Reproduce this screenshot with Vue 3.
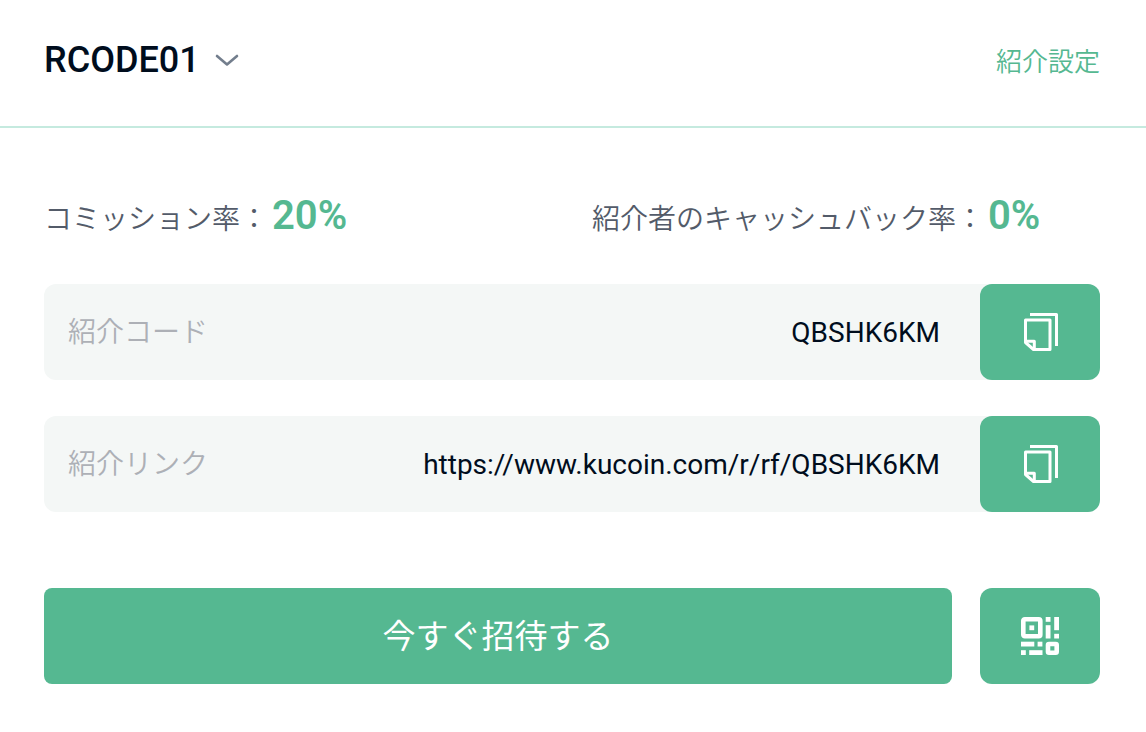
<script setup>
const rates = [
  { label: 'コミッション率：', value: '20%' },
  { label: '紹介者のキャッシュバック率：', value: '0%' },
]
const fields = [
  { id: 'referral-code', label: '紹介コード', value: 'QBSHK6KM' },
  { id: 'referral-link', label: '紹介リンク', value: 'https://www.kucoin.com/r/rf/QBSHK6KM' },
]
</script>

<template>
  <main class="card">
    <header class="header">
      <button class="code" type="button">
        <span>RCODE01</span>
        <svg class="chevron" viewBox="0 0 26 14" aria-hidden="true">
          <path d="M3 3 L13 11.5 L23 3" fill="none" stroke="currentColor" stroke-width="2.6" stroke-linecap="round" stroke-linejoin="round" />
        </svg>
      </button>
      <a class="settings" href="#">紹介設定</a>
    </header>

    <section class="body">
      <div class="rates">
        <p v-for="rate in rates" :key="rate.label" class="rate">
          <span>{{ rate.label }}</span><strong>{{ rate.value }}</strong>
        </p>
      </div>

      <div class="fields">
        <div v-for="field in fields" :key="field.id" class="field">
          <label :for="field.id">{{ field.label }}</label>
          <input :id="field.id" type="text" readonly :value="field.value" />
          <button class="square" type="button" aria-label="コピー">
            <svg class="icon" viewBox="0 0 40 40" aria-hidden="true">
              <g fill="none" stroke="currentColor" stroke-width="3" stroke-linejoin="round">
                <path d="M10 2.5 H36.5 V34" />
                <path d="M5.5 8 H30 V37.5 H13.5 L5.5 30.5 Z" />
                <path d="M5.5 29.3 H14.3 V37.5" />
              </g>
            </svg>
          </button>
        </div>
      </div>

      <div class="actions">
        <button class="invite" type="button">今すぐ招待する</button>
        <button class="square" type="button" aria-label="QRコード">
          <svg class="icon" viewBox="0 0 40 40" aria-hidden="true">
            <rect x="3.3" y="3.3" width="17" height="17" rx="1.5" fill="none" stroke="currentColor" stroke-width="4.6" />
            <rect x="28" y="28" width="8.7" height="8.7" rx="1" fill="none" stroke="currentColor" stroke-width="4.6" />
            <g fill="currentColor">
              <rect x="9.4" y="9.4" width="4.8" height="4.8" />
              <rect x="25.7" y="1" width="4.8" height="4.8" />
              <rect x="25.7" y="9.2" width="4.8" height="13.3" />
              <rect x="34.2" y="1" width="4.8" height="13.2" />
              <rect x="34.2" y="17.8" width="4.8" height="4.7" />
              <rect x="1" y="25.7" width="13.3" height="4.8" />
              <rect x="17.6" y="25.7" width="4.8" height="4.8" />
              <rect x="1" y="34.2" width="4.8" height="4.8" />
              <rect x="9.2" y="34.2" width="13.3" height="4.8" />
            </g>
          </svg>
        </button>
      </div>
    </section>
  </main>
</template>

<style>
body {
  background: #fff;
}
</style>

<style scoped>
.card,
.card button,
.card input {
  font-family: Roboto, "Noto Sans CJK JP", sans-serif;
}
.card {
  color: #000d1d;
}
button {
  border: 0;
  padding: 0;
  cursor: pointer;
}
.header {
  display: flex;
  align-items: center;
  justify-content: space-between;
  padding: 36px 46px 38px 44px;
  border-bottom: 2px solid #c5eadf;
}
.code {
  display: flex;
  align-items: center;
  gap: 14px;
  background: none;
  color: inherit;
  font-size: 36px;
  font-weight: 500;
  line-height: 48px;
  padding-bottom: 4px;
}
.chevron {
  width: 26px;
  height: 14px;
  color: #737e8d;
}
.settings {
  color: #55b891;
  font-size: 26px;
  font-weight: 350;
  line-height: 48px;
  text-decoration: none;
}
.body {
  padding: 60px 46px 48px 44px;
}
.rates {
  display: grid;
  grid-template-columns: 1fr 1fr;
  column-gap: 40px;
}
.rate {
  display: flex;
  align-items: baseline;
  gap: 4px;
  margin: 0;
  color: #535b69;
  font-size: 28px;
  font-weight: 350;
  line-height: 56px;
  white-space: nowrap;
}
.rate strong {
  color: #55b891;
  font-size: 40px;
  font-weight: 600;
}
.fields {
  display: grid;
  gap: 36px;
  margin-top: 36px;
}
.field {
  display: flex;
  align-items: center;
  height: 96px;
  padding-left: 24px;
  border-radius: 12px;
  background: #f4f7f6;
}
.field label {
  padding-top: 2px;
  color: #adb0b6;
  font-size: 28px;
  font-weight: 350;
  line-height: 40px;
  white-space: nowrap;
}
.field input {
  flex: 1;
  min-width: 0;
  padding: 2px 40px 0 16px;
  border: 0;
  background: none;
  color: inherit;
  font-size: 28px;
  line-height: 40px;
  text-align: right;
}
.square {
  display: flex;
  flex: none;
  align-items: center;
  justify-content: center;
  width: 120px;
  height: 96px;
  border-radius: 12px;
  background: #55b891;
  color: #fff;
}
.icon {
  width: 40px;
  height: 40px;
}
.actions {
  display: flex;
  gap: 28px;
  margin-top: 76px;
}
.invite {
  flex: 1;
  height: 96px;
  padding-bottom: 4px;
  border-radius: 8px;
  background: #55b891;
  color: #fff;
  font-size: 33px;
  font-weight: 400;
}
</style>
